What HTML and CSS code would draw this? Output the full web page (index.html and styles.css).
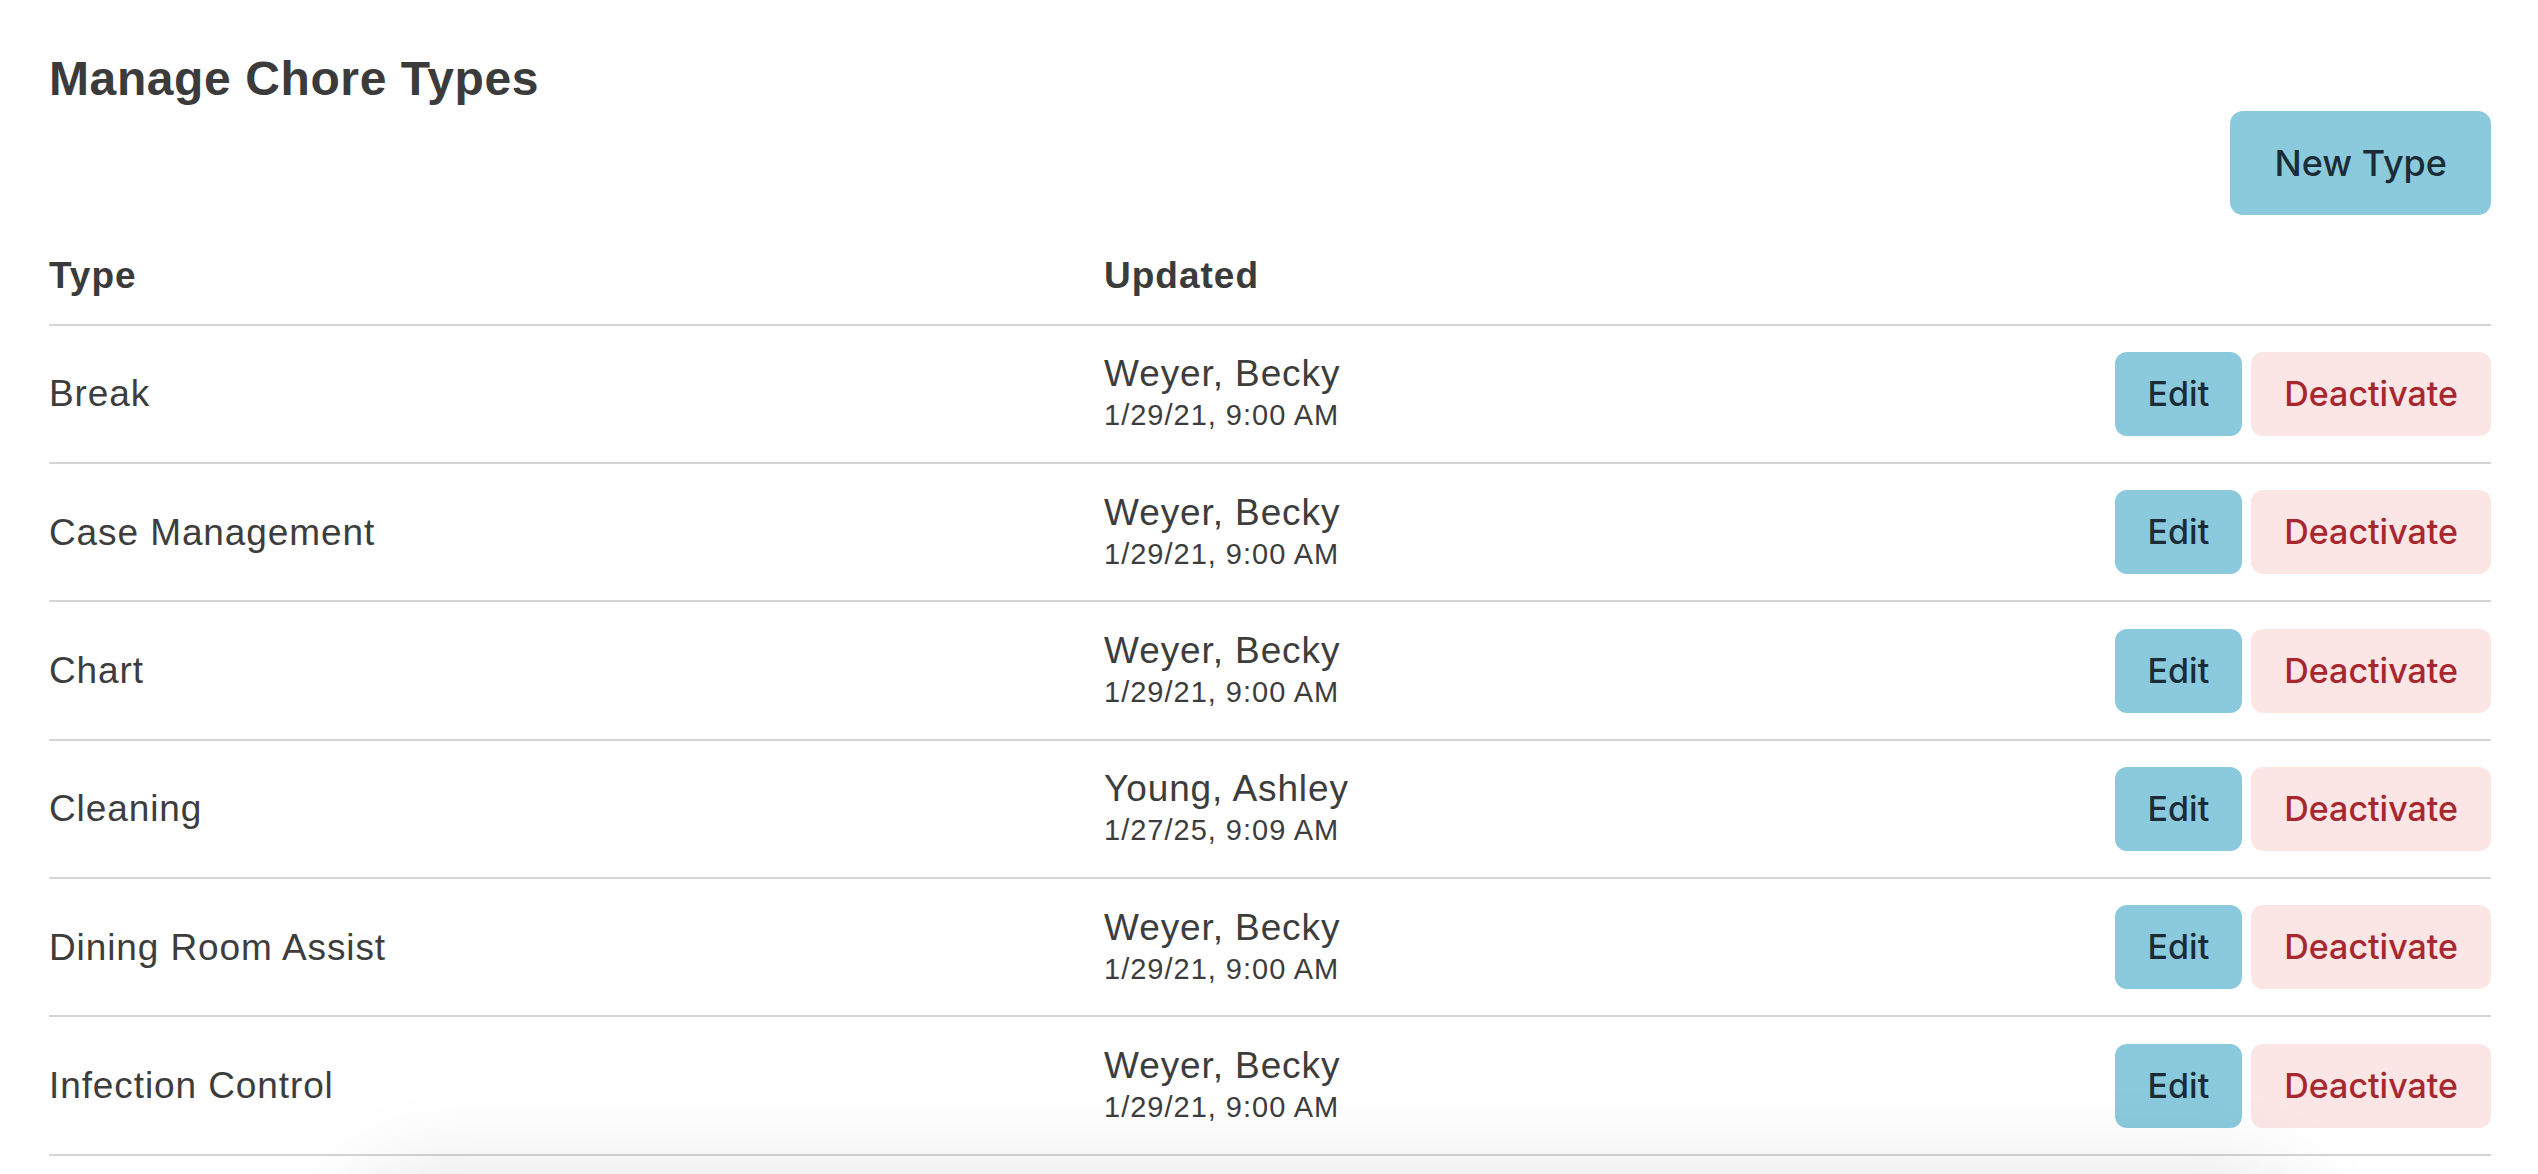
FILE: index.html
```html
<!DOCTYPE html>
<html lang="en">
<head>
<meta charset="utf-8">
<title>Manage Chore Types</title>
<link rel="stylesheet" href="styles.css">
</head>
<body>
<main class="page">
  <h1 class="title">Manage Chore Types</h1>
  <div class="toolbar">
    <button class="btn btn-info btn-lg" type="button">New Type</button>
  </div>
  <table class="types">
    <colgroup>
      <col class="col-type">
      <col class="col-updated">
      <col class="col-actions">
    </colgroup>
    <thead>
      <tr>
        <th>Type</th>
        <th>Updated</th>
        <th></th>
      </tr>
    </thead>
    <tbody>
      <tr>
        <td>Break</td>
        <td><span class="who">Weyer, Becky</span><span class="when">1/29/21, 9:00 AM</span></td>
        <td class="actions"><button class="btn btn-info" type="button">Edit</button><button class="btn btn-danger-soft" type="button">Deactivate</button></td>
      </tr>
      <tr>
        <td>Case Management</td>
        <td><span class="who">Weyer, Becky</span><span class="when">1/29/21, 9:00 AM</span></td>
        <td class="actions"><button class="btn btn-info" type="button">Edit</button><button class="btn btn-danger-soft" type="button">Deactivate</button></td>
      </tr>
      <tr>
        <td>Chart</td>
        <td><span class="who">Weyer, Becky</span><span class="when">1/29/21, 9:00 AM</span></td>
        <td class="actions"><button class="btn btn-info" type="button">Edit</button><button class="btn btn-danger-soft" type="button">Deactivate</button></td>
      </tr>
      <tr>
        <td>Cleaning</td>
        <td><span class="who">Young, Ashley</span><span class="when">1/27/25, 9:09 AM</span></td>
        <td class="actions"><button class="btn btn-info" type="button">Edit</button><button class="btn btn-danger-soft" type="button">Deactivate</button></td>
      </tr>
      <tr>
        <td>Dining Room Assist</td>
        <td><span class="who">Weyer, Becky</span><span class="when">1/29/21, 9:00 AM</span></td>
        <td class="actions"><button class="btn btn-info" type="button">Edit</button><button class="btn btn-danger-soft" type="button">Deactivate</button></td>
      </tr>
      <tr>
        <td>Infection Control</td>
        <td><span class="who">Weyer, Becky</span><span class="when">1/29/21, 9:00 AM</span></td>
        <td class="actions"><button class="btn btn-info" type="button">Edit</button><button class="btn btn-danger-soft" type="button">Deactivate</button></td>
      </tr>
    </tbody>
  </table>
</main>
<div class="floating-shadow" aria-hidden="true"></div>
</body>
</html>
```

FILE: styles.css
```css
html, body {
  margin: 0;
  padding: 0;
  background: #ffffff;
}

body {
  font-family: "Liberation Sans", Arial, Helvetica, sans-serif;
  color: #3d3d3d;
  font-size: 37px;
  overflow: hidden;
}

.page {
  padding: 50px 47px 0 49px;
}

.title {
  margin: 0 0 3px 0;
  font-size: 48px;
  line-height: 1.2;
  font-weight: 700;
  letter-spacing: 0.6px;
  color: #3b3b3b;
}

.toolbar {
  display: flex;
  justify-content: flex-end;
}

.btn {
  font-family: Inter, "Liberation Sans", sans-serif;
  font-size: 34px;
  line-height: 48px;
  font-weight: 500;
  letter-spacing: 0;
  border: 0;
  border-radius: 12px;
  padding: 18px 33px;
  cursor: pointer;
  white-space: nowrap;
}

.btn-lg {
  font-size: 36px;
  line-height: 54px;
  padding: 25px 44px;
  border-radius: 13px;
}

.btn-info {
  background: #8acadc;
  color: #1b2c37;
}

.btn-danger-soft {
  background: #fbe5e5;
  color: #a8272f;
}

.types {
  width: 100%;
  border-collapse: collapse;
  margin-top: 0;
}

.col-type {
  width: 1055px;
}

.types th {
  text-align: left;
  font-weight: 700;
  font-size: 37px;
  line-height: 54px;
  letter-spacing: 1px;
  padding: 34px 0 21px 0;
  border-bottom: 2px solid #d5d5d5;
  color: #3b3b3b;
}

.types td {
  padding: 26.2px 0;
  border-bottom: 2px solid #d5d5d5;
  vertical-align: middle;
  font-size: 37px;
  line-height: 43px;
  letter-spacing: 0.9px;
}

.who {
  display: block;
  font-size: 37px;
  line-height: 43px;
  letter-spacing: 0.9px;
}

.when {
  display: block;
  font-size: 29px;
  line-height: 40px;
  letter-spacing: 1px;
}

.actions {
  text-align: right;
  white-space: nowrap;
}

.actions .btn + .btn {
  margin-left: 9px;
}

.floating-shadow {
  position: fixed;
  left: 370px;
  right: 250px;
  top: 1200px;
  height: 300px;
  border-radius: 60px;
  background: #ffffff;
  box-shadow: 0 0 90px 30px rgba(0, 0, 0, 0.10);
}
```
